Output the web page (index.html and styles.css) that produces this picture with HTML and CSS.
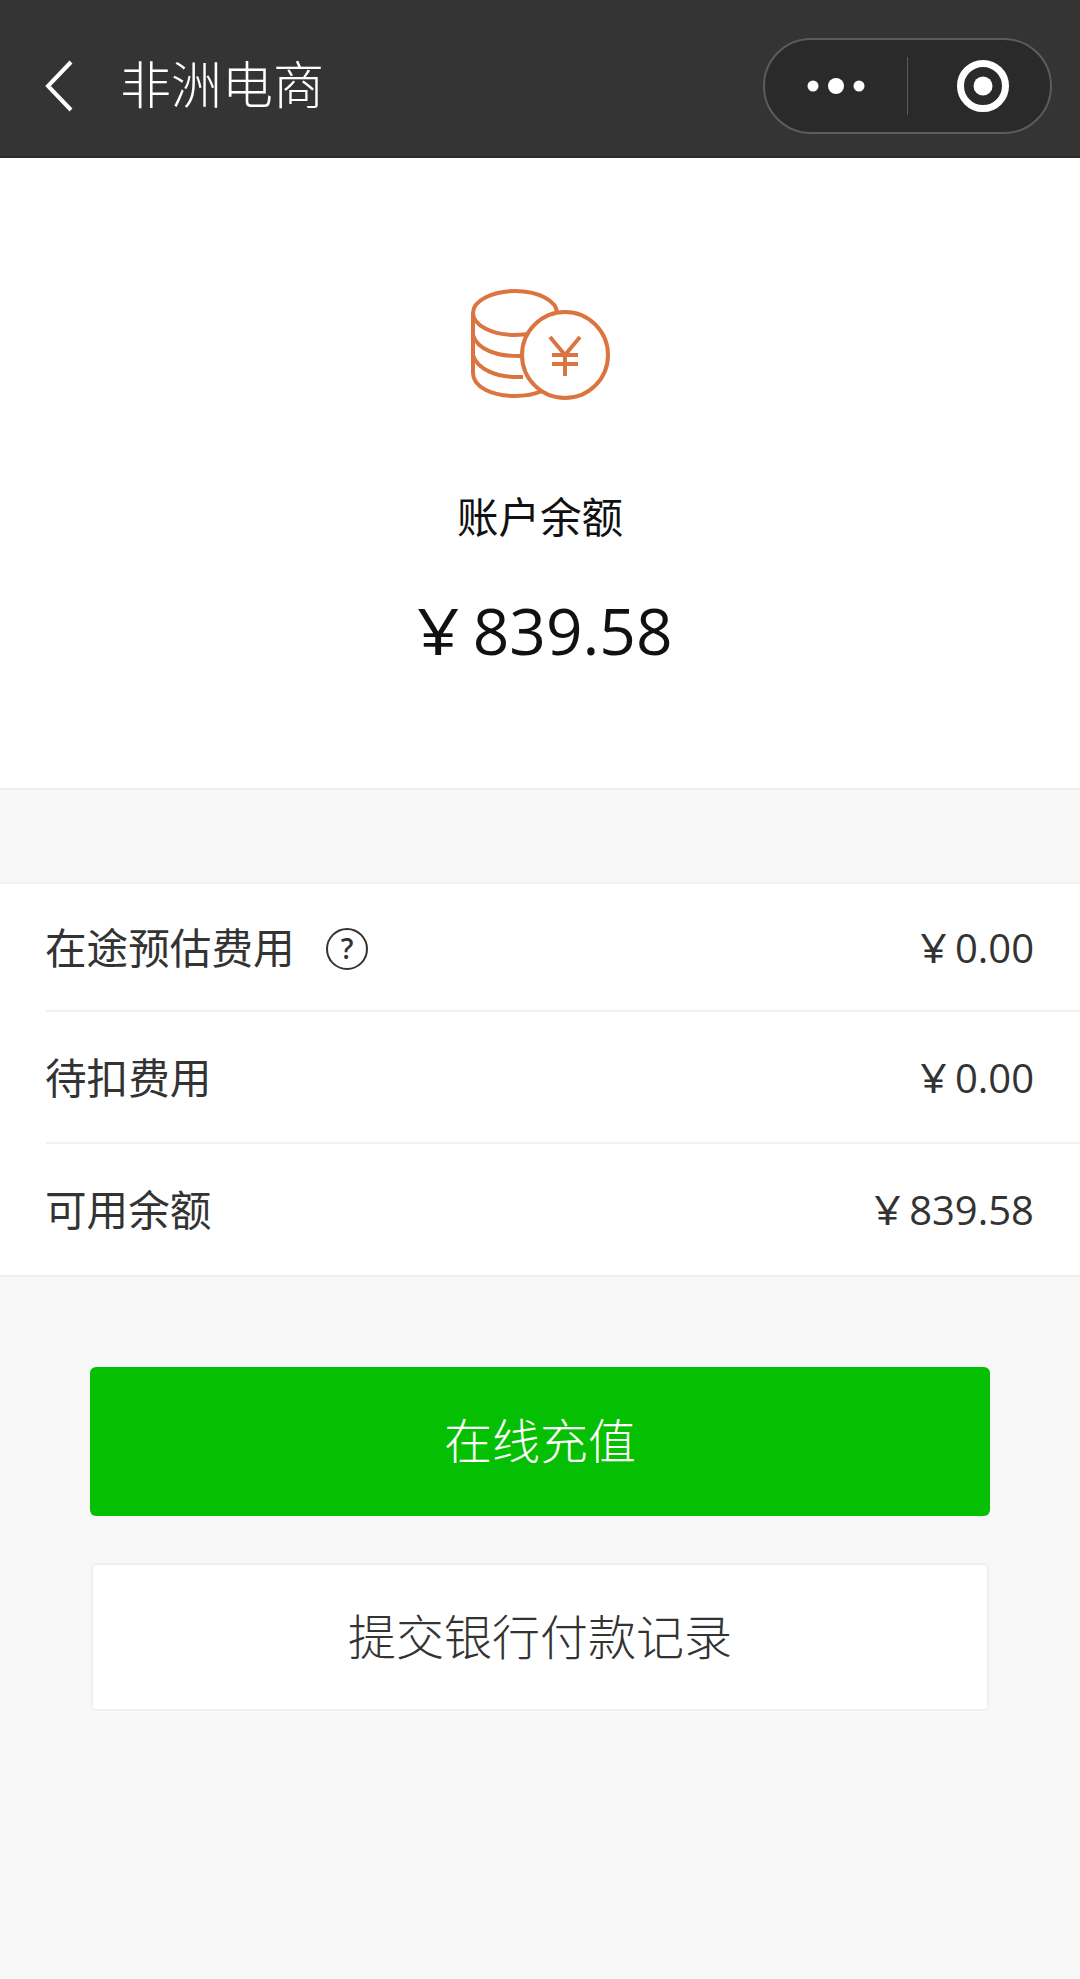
FILE: index.html
```html
<!DOCTYPE html>
<html lang="zh-CN">
<head>
<meta charset="utf-8">
<title>非洲电商</title>
<link rel="stylesheet" href="styles.css">
</head>
<body>
<header class="nav">
  <svg class="back" viewBox="0 0 32 52" width="32" height="52"><path d="M28 2 L5 26 L28 50" fill="none" stroke="#fff" stroke-width="4"/></svg>
  <span class="nav-title">非洲电商</span>
  <div class="capsule">
    <div class="cap-more">
      <svg viewBox="0 0 58 20" width="58" height="20"><circle cx="6" cy="10" r="5.5" fill="#fff"/><circle cx="29" cy="10" r="8" fill="#fff"/><circle cx="52" cy="10" r="5.5" fill="#fff"/></svg>
    </div>
    <div class="cap-sep"></div>
    <div class="cap-close">
      <svg viewBox="0 0 54 54" width="54" height="54"><circle cx="27" cy="27" r="22.5" fill="none" stroke="#fff" stroke-width="7"/><circle cx="27" cy="27" r="9.5" fill="#fff"/></svg>
    </div>
  </div>
</header>

<section class="hero">
  <svg class="coins" viewBox="0 0 200 140" width="200" height="140">
    <g fill="none" stroke="#dc7440" stroke-width="4">
      <ellipse cx="75" cy="43" rx="42" ry="22"/>
      <path d="M33 43 V103 C33 117 52 126 75 126 C84 126 93 125 102 121"/>
      <path d="M33 65 C37 79 56 87 83 86"/>
      <path d="M33 85 C37 99 56 108 83 107"/>
      <circle class="coin-face" cx="125" cy="85" r="43"/>
      <path d="M110 67 L125 85 L140 67 M125 85 V106 M112 85 H138 M112 94 H138"/>
    </g>
  </svg>
  <div class="hero-label">账户余额</div>
  <div class="hero-amount"><span class="yen">¥</span> 839.58</div>
</section>

<section class="list">
  <div class="row row-first">
    <div class="row-label">在途预估费用
      <svg class="help" viewBox="0 0 42 42" width="42" height="42"><circle cx="21" cy="21" r="20" fill="none" stroke="#333" stroke-width="2"/><text x="21" y="31" class="help-mark">?</text></svg>
    </div>
    <div class="row-value"><span class="yen">¥</span> 0.00</div>
  </div>
  <div class="row">
    <div class="row-label">待扣费用</div>
    <div class="row-value"><span class="yen">¥</span> 0.00</div>
  </div>
  <div class="row">
    <div class="row-label">可用余额</div>
    <div class="row-value"><span class="yen">¥</span> 839.58</div>
  </div>
</section>

<div class="actions">
  <div class="btn btn-primary">在线充值</div>
  <div class="btn btn-secondary">提交银行付款记录</div>
</div>
</body>
</html>
```
FILE: styles.css
```css
* { box-sizing: border-box; }
html, body { margin: 0; padding: 0; }
body {
  width: 1080px;
  height: 1979px;
  background: #f8f8f8;
  font-family: "Open Sans", "Noto Sans CJK SC", sans-serif;
  color: #333;
  overflow: hidden;
}
.nav {
  height: 158px;
  background: #343434;
  border-bottom: 2px solid #2a2a2a;
  display: flex;
  align-items: center;
  padding: 16px 28px 0 43px;
}
.back { flex: none; }
.nav-title {
  margin: 0 0 8px 45px;
  font: 300 51px/1 "Noto Sans CJK SC", sans-serif;
  color: #fff;
}
.capsule {
  margin-left: auto;
  width: 289px;
  height: 96px;
  border: 2px solid #5c5c5c;
  border-radius: 48px;
  background: #2a2a2a;
  display: flex;
  align-items: center;
}
.cap-more, .cap-close {
  display: flex;
  align-items: center;
  justify-content: center;
}
.cap-more { flex: none; width: 142px; }
.cap-close { flex: 1; padding-left: 8px; }
.cap-more svg, .cap-close svg { display: block; }
.cap-sep {
  width: 1px;
  height: 58px;
  background: #5c5c5c;
}
.hero {
  height: 632px;
  background: #fff;
  border-bottom: 2px solid #eeeeee;
  display: flex;
  flex-direction: column;
  align-items: center;
  padding-top: 112px;
}
.coins { display: block; }
.coin-face { fill: #fff; }
.hero-label {
  margin-top: 77px;
  font: 400 41.5px/56px "Noto Sans CJK SC", sans-serif;
  color: #111;
}
.hero-amount {
  margin: 44px 0 0 12px;
  font: 400 64px/88px "Open Sans", "Noto Sans CJK SC", sans-serif;
  color: #111;
}
.yen { display: inline-block; transform: scaleX(1.16); }
.list {
  margin-top: 92px;
  background: #fff;
  border-top: 2px solid #f1f1f1;
  border-bottom: 2px solid #eeeeee;
  padding-left: 46px;
}
.row {
  height: 132px;
  display: flex;
  align-items: center;
  justify-content: space-between;
  padding: 0 46px 3px 0;
  border-bottom: 2px solid #f1f1f1;
}
.row-first { height: 128px; }
.row:last-child { border-bottom: 0; height: 131px; }
.row-label {
  display: flex;
  align-items: center;
  margin-left: -1px;
  font: 400 41.6px/56px "Noto Sans CJK SC", sans-serif;
  color: #333;
}
.help { margin: 6px 0 0 31px; display: block; }
.help-mark {
  font: 600 28px "Open Sans", sans-serif;
  fill: #333;
  text-anchor: middle;
}
.row-value {
  padding-top: 4px;
  font: 400 40px/56px "Open Sans", "Noto Sans CJK SC", sans-serif;
  color: #333;
}
.actions {
  padding: 90px 90px 0;
  display: flex;
  flex-direction: column;
  align-items: center;
}
.btn {
  display: flex;
  align-items: center;
  justify-content: center;
  padding-bottom: 7px;
  font: 300 48px/1 "Noto Sans CJK SC", sans-serif;
  border-radius: 6px;
}
.btn-primary {
  width: 900px;
  height: 149px;
  background: #05bf02;
  color: #fff;
}
.btn-secondary {
  margin-top: 47px;
  width: 898px;
  height: 148px;
  background: #fff;
  border: 2px solid #f0f0f0;
  color: #333;
}
```
